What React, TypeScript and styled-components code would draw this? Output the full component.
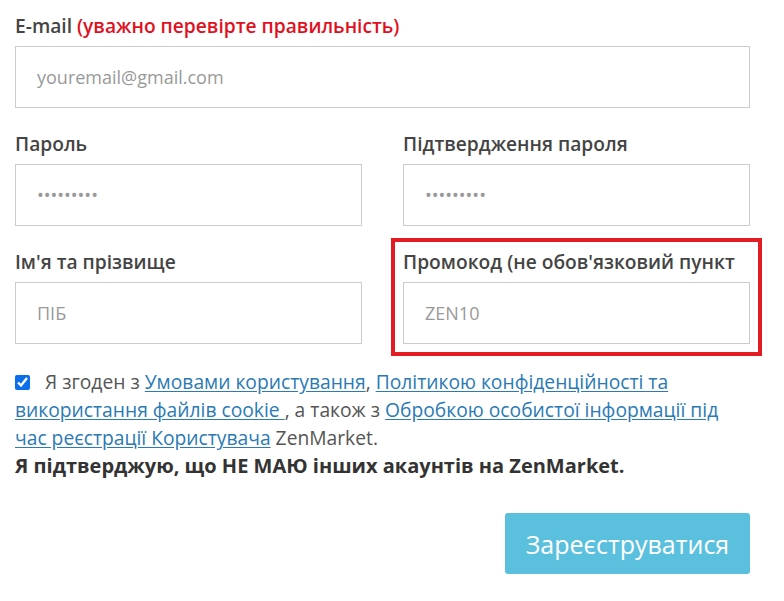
import React from "react";
import styled, { createGlobalStyle } from "styled-components";

const GlobalStyle = createGlobalStyle`
  html, body { margin: 0; padding: 0; background: #fff; }
  body { font-family: "Open Sans", "Noto Sans", sans-serif; color: #555; }
  * { box-sizing: border-box; }
`;

const Form = styled.form`
  width: 735px;
  margin: 14px 0 0 15px;
  display: flex;
  flex-direction: column;
`;

const Row = styled.div`
  display: grid;
  grid-template-columns: 347px 347px;
  column-gap: 41px;
`;

const Group = styled.div<{ $highlight?: boolean }>`
  display: flex;
  flex-direction: column;
  margin-bottom: 24px;
  outline: ${(p) => (p.$highlight ? "4px solid #e31b23" : "none")};
  outline-offset: 8px;
`;

const Label = styled.label`
  font-size: 19.2px;
  line-height: 24px;
  font-weight: 600;
  color: #444;
  margin-bottom: 8px;
  white-space: nowrap;
`;

const Warn = styled.span`
  color: #e0101e;
`;

const Input = styled.input`
  height: 62px;
  width: 100%;
  border: 1px solid #ccc;
  border-radius: 0;
  padding: 0 21px;
  font-family: "Open Sans", "Noto Sans", sans-serif;
  font-size: 18px;
  color: #555;
  outline: none;
  &::placeholder { color: #999; }
`;

const Agreement = styled.div`
  font-size: 19.25px;
  line-height: 28px;
  color: #555;
`;

const Check = styled.input`
  width: 15px;
  height: 15px;
  margin: 0 10px 0 0;
  vertical-align: -1px;
  accent-color: #0a6fe8;
`;

const Link = styled.a`
  color: #2a7ab5;
  text-decoration: underline;
  text-underline-offset: 2px;
`;

const Strong = styled.div`
  font-size: 20px;
  font-weight: 700;
  color: #333;
`;

const Actions = styled.div`
  display: flex;
  justify-content: flex-end;
  margin-top: 33px;
`;

const Button = styled.button`
  width: 245px;
  height: 61px;
  border: none;
  border-radius: 3px;
  background: #5bc0de;
  color: #fff;
  font-family: "Open Sans", "Noto Sans", sans-serif;
  font-size: 25px;
  cursor: pointer;
`;

export default function App() {
  return (
    <>
      <GlobalStyle />
      <Form onSubmit={(e) => e.preventDefault()}>
        <Group>
          <Label>
            E-mail <Warn>(уважно перевірте правильність)</Warn>
          </Label>
          <Input type="email" placeholder="youremail@gmail.com" />
        </Group>
        <Row>
          <Group>
            <Label>Пароль</Label>
            <Input type="password" placeholder="•••••••••" />
          </Group>
          <Group>
            <Label>Підтвердження пароля</Label>
            <Input type="password" placeholder="•••••••••" />
          </Group>
        </Row>
        <Row>
          <Group>
            <Label>Ім'я та прізвище</Label>
            <Input type="text" placeholder="ПІБ" />
          </Group>
          <Group $highlight>
            <Label>Промокод (не обов'язковий пункт</Label>
            <Input type="text" placeholder="ZEN10" />
          </Group>
        </Row>
        <Agreement>
          <Check type="checkbox" defaultChecked /> Я згоден з{" "}
          <Link href="#">Умовами користування</Link>,{" "}
          <Link href="#">Політикою конфіденційності та використання файлів cookie </Link>, а також з{" "}
          <Link href="#">Обробкою особистої інформації під час реєстрації Користувача</Link> ZenMarket.
          <Strong>Я підтверджую, що НЕ МАЮ інших акаунтів на ZenMarket.</Strong>
        </Agreement>
        <Actions>
          <Button type="submit">Зареєструватися</Button>
        </Actions>
      </Form>
    </>
  );
}
